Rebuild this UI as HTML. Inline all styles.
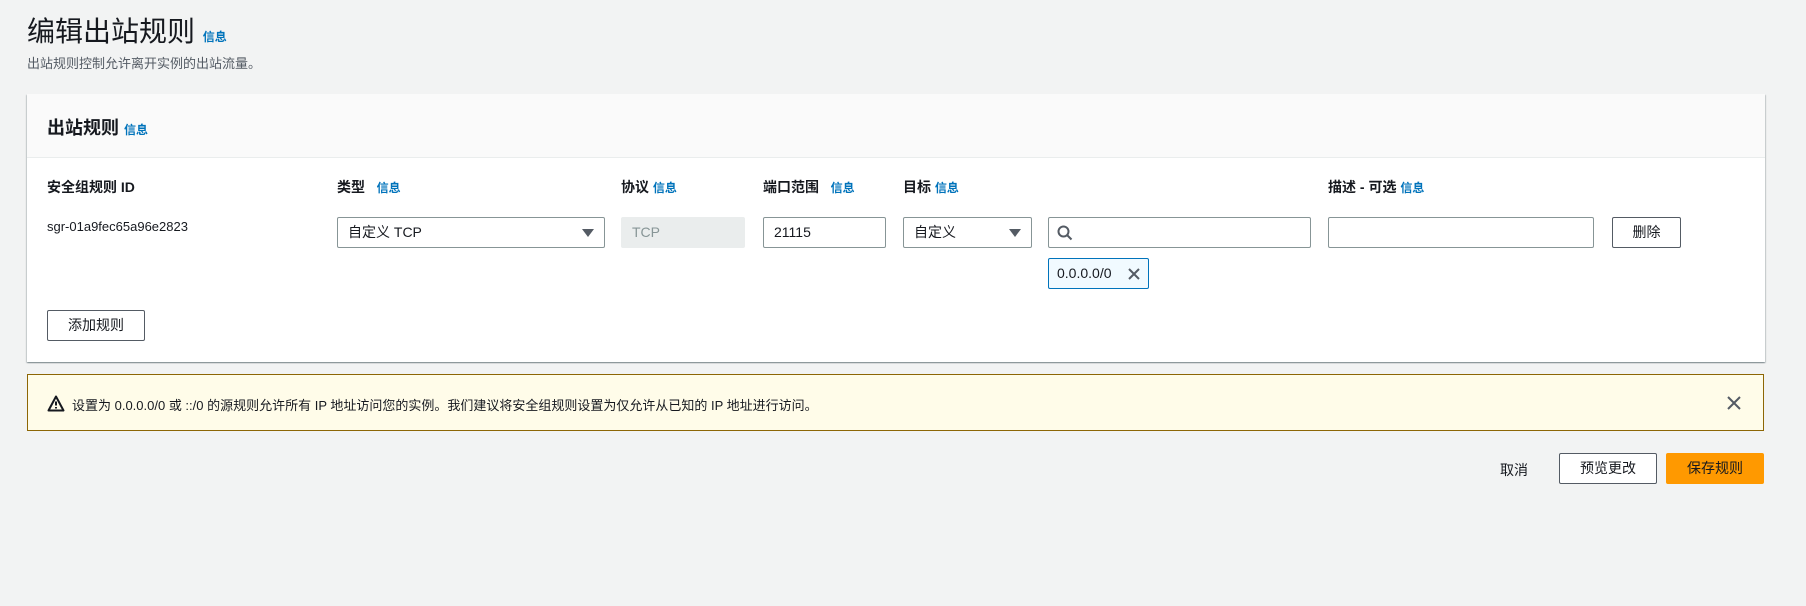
<!DOCTYPE html>
<html><head><meta charset="utf-8"><style>
*{box-sizing:border-box;margin:0;padding:0}
body{width:1806px;height:606px;background:#f2f3f3;font-family:"Liberation Sans","Noto Sans CJK SC",sans-serif;color:#16191f;position:relative;overflow:hidden;font-size:14px}
.a{position:absolute}
.info{color:#0073bb;font-size:12px;font-weight:bold}
.lbl{font-weight:bold;font-size:14px}
.inp{position:absolute;border:1px solid #879596;background:#fff;border-radius:2px;height:31px;line-height:29px;padding-left:10px;font-size:14px}
.btn{position:absolute;border:1px solid #545b64;background:#fff;border-radius:2px;height:31px;line-height:29px;text-align:center;font-size:14px;color:#16191f}
.tri{position:absolute;right:10px;top:11px;width:0;height:0;border-left:6px solid transparent;border-right:6px solid transparent;border-top:8px solid #545b64}
</style></head><body>
<div class="a" style="left:27px;top:10px;font-size:28px;">编辑出站规则 <span class="info">信息</span></div>
<div class="a" style="left:27px;top:53px;font-size:13px;color:#545b64">出站规则控制允许离开实例的出站流量。</div>
<div class="a" style="left:27px;top:94px;width:1738px;height:268px;background:#fff;box-shadow:0 1px 1px 0 rgba(0,28,36,.3),1px 1px 1px 0 rgba(0,28,36,.15),-1px 1px 1px 0 rgba(0,28,36,.15)">
 <div style="height:64px;background:#fafafa;border-bottom:1px solid #eaeded"></div>
</div>
<div class="a" style="left:47px;top:114px;font-size:18px;font-weight:bold">出站规则 <span class="info">信息</span></div>
<div class="a lbl" style="left:47px;top:177px">安全组规则 ID</div>
<div class="a lbl" style="left:337px;top:177px">类型 &nbsp;&nbsp;<span class="info">信息</span></div>
<div class="a lbl" style="left:621px;top:177px">协议 <span class="info">信息</span></div>
<div class="a lbl" style="left:763px;top:177px">端口范围 &nbsp;&nbsp;<span class="info">信息</span></div>
<div class="a lbl" style="left:903px;top:177px">目标 <span class="info">信息</span></div>
<div class="a lbl" style="left:1328px;top:177px">描述 - 可选 <span class="info">信息</span></div>
<div class="a" style="left:47px;top:219px;font-size:13px">sgr-01a9fec65a96e2823</div>
<div class="inp" style="left:337px;top:217px;width:268px">自定义 TCP<div class="tri"></div></div>
<div class="inp" style="left:621px;top:217px;width:124px;background:#eaeded;border-color:#eaeded;color:#879596">TCP</div>
<div class="inp" style="left:763px;top:217px;width:123px">21115</div>
<div class="inp" style="left:903px;top:217px;width:129px">自定义<div class="tri"></div></div>
<div class="inp" style="left:1048px;top:217px;width:263px"><svg width="16" height="16" viewBox="0 0 16 16" style="position:absolute;left:8px;top:7px"><circle cx="6.5" cy="6.5" r="5" fill="none" stroke="#545b64" stroke-width="2"/><path d="M10 10l4.5 4.5" stroke="#545b64" stroke-width="2"/></svg></div>
<div class="inp" style="left:1328px;top:217px;width:266px"></div>
<div class="btn" style="left:1612px;top:217px;width:69px">删除</div>
<div class="a" style="left:1048px;top:258px;width:101px;height:31px;border:1px solid #0073bb;background:#f1faff;border-radius:2px;line-height:29px;padding-left:8px">0.0.0.0/0<svg width="14" height="14" viewBox="0 0 14 14" style="position:absolute;left:78px;top:8px"><path d="M2 2l10 10M12 2L2 12" stroke="#545b64" stroke-width="2"/></svg></div>
<div class="btn" style="left:47px;top:310px;width:98px">添加规则</div>
<div class="a" style="left:27px;top:374px;width:1737px;height:57px;background:#fffce9;border:1px solid #8d6605"></div>
<svg class="a" style="left:47px;top:395px" width="18" height="17" viewBox="0 0 18 17"><path d="M9 1.5L16.5 15.5H1.5Z" fill="none" stroke="#16191f" stroke-width="2" stroke-linejoin="round"/><path d="M9 6.5v4M9 12v1.5" stroke="#16191f" stroke-width="2"/></svg>
<div class="a" style="left:72px;top:395px;font-size:13px">设置为 0.0.0.0/0 或 ::/0 的源规则允许所有 IP 地址访问您的实例。我们建议将安全组规则设置为仅允许从已知的 IP 地址进行访问。</div>
<svg class="a" style="left:1726px;top:395px" width="16" height="16" viewBox="0 0 16 16"><path d="M2 2l12 12M14 2L2 14" stroke="#545b64" stroke-width="2"/></svg>
<div class="a" style="left:1500px;top:460px;color:#16191f">取消</div>
<div class="btn" style="left:1559px;top:453px;width:98px">预览更改</div>
<div class="btn" style="left:1666px;top:453px;width:98px;background:#ff9900;border-color:#ff9900;color:#16191f">保存规则</div>
</body></html>
